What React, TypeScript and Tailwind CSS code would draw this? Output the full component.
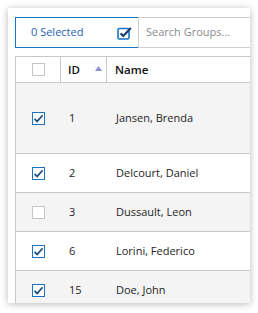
const ROWS = [
  { id: "1", name: "Jansen, Brenda", checked: true, tall: true },
  { id: "2", name: "Delcourt, Daniel", checked: true },
  { id: "3", name: "Dussault, Leon", checked: false },
  { id: "6", name: "Lorini, Federico", checked: true },
  { id: "15", name: "Doe, John", checked: true },
];

function RowCheck({ checked }: { checked: boolean }) {
  if (!checked) {
    return <span className="block h-[13px] w-[13px] border border-[#c6c6c6] bg-white" />;
  }
  return (
    <span className="relative block h-[13px] w-[13px] border border-[#1a73c9] bg-white">
      <svg viewBox="0 0 13 13" className="absolute left-[-1px] top-[-1px] h-[13px] w-[13px]" aria-hidden>
        <path d="M2.5 6.8 L5.2 9.4 L10.6 3.2" fill="none" stroke="#1d4f86" strokeWidth="1.7" />
      </svg>
    </span>
  );
}

export default function App() {
  return (
    <div className="h-[313px] w-[258px] bg-white p-2" style={{ fontFamily: "'Open Sans', 'Noto Sans', sans-serif" }}>
      <div className="h-[295px] w-[242px] overflow-hidden bg-white shadow-[0_1px_7px_rgba(0,0,0,0.28)]">
        <div className="flex pl-[7px] pt-[9px]">
          <div className="flex h-[31px] w-[124px] shrink-0 items-center justify-between border border-[#1a73c9] pl-[15px] pr-[5px]">
            <span className="text-[11px] text-[#1a65b5]">0 Selected</span>
            <svg viewBox="0 0 16 14" className="h-[14px] w-[16px]" aria-hidden>
              <rect x="1" y="2.5" width="11" height="10.5" rx="1.5" fill="none" stroke="#1a73c9" strokeWidth="1.6" />
              <path d="M3.6 7.4 L6.3 10 L13.8 2" fill="none" stroke="#1b3f6e" strokeWidth="2.2" />
            </svg>
          </div>
          <div className="-ml-px flex h-[31px] w-[120px] shrink-0 items-center border border-[#cfcfcf] pl-[7px]">
            <span className="text-[11px] text-[#8a8a8a]">Search Groups...</span>
          </div>
        </div>

        <div className="ml-[7px] mt-[8px] w-[240px] border-l border-[#c8c8c8]">
          <div className="flex h-[27px] border-y border-[#c8c8c8] bg-white">
            <div className="flex w-[45px] items-center justify-center border-r border-[#c8c8c8]">
              <span className="block h-[13px] w-[13px] border border-[#c6c6c6] bg-white" />
            </div>
            <div className="flex w-[46px] items-center justify-between border-r border-[#c8c8c8] pl-[7px] pr-[4px]">
              <span className="text-[11.5px] font-semibold text-[#111]">ID</span>
              <svg viewBox="0 0 7 5" className="mb-[3px] h-[5px] w-[7px]" aria-hidden>
                <path d="M3.5 0 L7 5 L0 5 Z" fill="#8f8fd6" />
              </svg>
            </div>
            <div className="relative flex flex-1 items-center pl-[8px]">
              <span className="text-[11.5px] font-semibold text-[#111]">Name</span>
              <span className="absolute right-[-7px] top-[6px] h-[12px] w-[12px] rounded-full bg-[#e6e6e6]" />
            </div>
          </div>

          {ROWS.map((r, i) => (
            <div
              key={r.id}
              className={`flex items-center border-b border-[#c8c8c8] ${r.tall ? "h-[71px]" : "h-[39px]"} ${
                i % 2 === 0 ? "bg-[#f4f4f4]" : "bg-white"
              }`}
            >
              <div className="flex w-[45px] justify-center">
                <RowCheck checked={r.checked} />
              </div>
              <div className="w-[46px] pl-[8px] text-[11px] text-[#1e1e1e]">{r.id}</div>
              <div className="flex-1 pl-[9px] text-[11px] text-[#1e1e1e]">{r.name}</div>
            </div>
          ))}
        </div>
      </div>
    </div>
  );
}
